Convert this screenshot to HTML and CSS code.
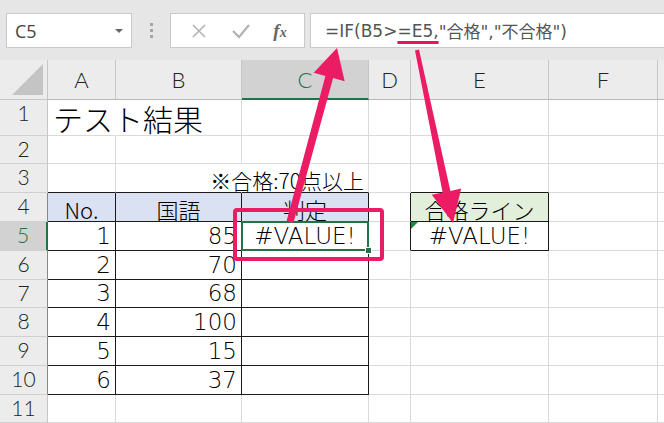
FILE: index.html
```html
<!DOCTYPE html>
<html lang="ja">
<head>
    <meta charset="UTF-8">
    <title>テスト結果</title>
    <link rel="stylesheet" href="styles.css">
</head>
<body>

    <div class="toolbar">
        <div class="namebox">
            <span>C5</span>
            <span class="caret"></span>
        </div>
        <div class="grip"><i></i><i></i><i></i></div>
        <div class="fxbtns">
            <svg class="icon" width="18" height="18" viewBox="0 0 18 18"><path d="M3 3 L15 15 M15 3 L3 15" stroke="#b3b3b3" stroke-width="1.6" fill="none"/></svg>
            <svg class="icon" width="20" height="18" viewBox="0 0 20 18"><path d="M2 9 L8 15 L18 3" stroke="#b3b3b3" stroke-width="2.2" fill="none"/></svg>
            <span class="fx">f<small>x</small></span>
        </div>
        <div class="formula">=IF(B5&gt;<span class="mark">=E5,</span>"合格","不合格")</div>
    </div>

    <div class="sheet">
        <!-- 列見出し -->
        <div class="corner"></div>
        <div class="ch">A</div>
        <div class="ch">B</div>
        <div class="ch sel">C</div>
        <div class="ch">D</div>
        <div class="ch">E</div>
        <div class="ch">F</div>
        <div class="ch"></div>

        <!-- 1 -->
        <div class="rh">1</div>
        <div class="c nr title">テスト結果</div>
        <div class="c"></div>
        <div class="c"></div>
        <div class="c"></div>
        <div class="c"></div>
        <div class="c"></div>
        <div class="c"></div>

        <!-- 2 -->
        <div class="rh">2</div>
        <div class="c"></div>
        <div class="c"></div>
        <div class="c"></div>
        <div class="c"></div>
        <div class="c"></div>
        <div class="c"></div>
        <div class="c"></div>

        <!-- 3 -->
        <div class="rh">3</div>
        <div class="c bb"></div>
        <div class="c bb nr"></div>
        <div class="c bb note"><span>※合格:70点以上</span></div>
        <div class="c"></div>
        <div class="c bb"></div>
        <div class="c"></div>
        <div class="c"></div>

        <!-- 4 -->
        <div class="rh br">4</div>
        <div class="c br bb blue mid">No.</div>
        <div class="c br bb blue mid">国語</div>
        <div class="c br bb blue mid">判定</div>
        <div class="c br"></div>
        <div class="c br bb green mid">合格ライン</div>
        <div class="c"></div>
        <div class="c"></div>

        <!-- 5 -->
        <div class="rh br sel">5</div>
        <div class="c br bb num">1</div>
        <div class="c br bb num">85</div>
        <div class="c br bb mid active">#VALUE!</div>
        <div class="c br"></div>
        <div class="c br bb mid flag">#VALUE!</div>
        <div class="c"></div>
        <div class="c"></div>

        <!-- 6 -->
        <div class="rh br">6</div>
        <div class="c br bb num">2</div>
        <div class="c br bb num">70</div>
        <div class="c br bb"></div>
        <div class="c"></div>
        <div class="c"></div>
        <div class="c"></div>
        <div class="c"></div>

        <!-- 7 -->
        <div class="rh br">7</div>
        <div class="c br bb num">3</div>
        <div class="c br bb num">68</div>
        <div class="c br bb"></div>
        <div class="c"></div>
        <div class="c"></div>
        <div class="c"></div>
        <div class="c"></div>

        <!-- 8 -->
        <div class="rh br">8</div>
        <div class="c br bb num">4</div>
        <div class="c br bb num">100</div>
        <div class="c br bb"></div>
        <div class="c"></div>
        <div class="c"></div>
        <div class="c"></div>
        <div class="c"></div>

        <!-- 9 -->
        <div class="rh br">9</div>
        <div class="c br bb num">5</div>
        <div class="c br bb num">15</div>
        <div class="c br bb"></div>
        <div class="c"></div>
        <div class="c"></div>
        <div class="c"></div>
        <div class="c"></div>

        <!-- 10 -->
        <div class="rh br">10</div>
        <div class="c br bb num">6</div>
        <div class="c br bb num">37</div>
        <div class="c br bb"></div>
        <div class="c"></div>
        <div class="c"></div>
        <div class="c"></div>
        <div class="c"></div>

        <!-- 11 -->
        <div class="rh">11</div>
        <div class="c"></div>
        <div class="c"></div>
        <div class="c"></div>
        <div class="c"></div>
        <div class="c"></div>
        <div class="c"></div>
        <div class="c"></div>
    </div>

    <!-- 注釈 (矢印と枠) -->
    <svg class="notes" width="664" height="423" viewBox="0 0 664 423">
        <rect x="235" y="210" width="147" height="49" rx="2" fill="none" stroke="#ec1c64" stroke-width="4"/>
        <polygon fill="#ec1c64" points="286.6,221 325.4,76 313.7,72.8 337,48 344.7,81.2 333.1,78.1 293.4,223"/>
        <polygon fill="#ec1c64" points="415,50.4 442.6,192.5 431.8,194.8 453,223 461.2,188.6 450.4,190.9 419,49.6"/>
    </svg>

</body>
</html>
```

FILE: styles.css
```css
body {
    margin: 0;
    width: 664px;
    height: 423px;
    overflow: hidden;
    position: relative;
    background: #fff;
    font-family: "DejaVu Sans", "Noto Sans CJK JP", sans-serif;
    color: #000;
}

/* 上のバー */
.toolbar {
    height: 60px;
    box-sizing: border-box;
    padding: 13px 0 0 6px;
    display: flex;
    align-items: flex-start;
    background: #e6e6e6;
}

.namebox {
    width: 126px;
    height: 35px;
    box-sizing: border-box;
    border: 1px solid #c8c8c8;
    background: #fff;
    display: flex;
    align-items: center;
    justify-content: space-between;
    padding: 0 8px 0 8px;
    font-family: "Open Sans", sans-serif;
    font-size: 18px;
    color: #444;
}

.caret {
    width: 0;
    height: 0;
    border-left: 4px solid transparent;
    border-right: 4px solid transparent;
    border-top: 4px solid #666;
}

.grip {
    width: 38px;
    height: 35px;
    display: flex;
    flex-direction: column;
    align-items: center;
    justify-content: center;
    gap: 3px;
}

.grip i {
    width: 3px;
    height: 3px;
    background: #a6a6a6;
}

.fxbtns {
    width: 135px;
    height: 35px;
    box-sizing: border-box;
    border: 1px solid #c8c8c8;
    background: #fff;
    display: flex;
    align-items: center;
    justify-content: space-around;
    padding: 0 6px 0 8px;
}

.fx {
    font-family: "Liberation Serif", serif;
    font-style: italic;
    font-weight: bold;
    font-size: 19px;
    color: #666;
}

.fx small {
    font-size: 14px;
}

.formula {
    flex: 1;
    height: 35px;
    margin-left: 5px;
    box-sizing: border-box;
    border: 1px solid #c8c8c8;
    border-right: none;
    background: #fff;
    padding-left: 14px;
    display: flex;
    align-items: center;
    font-family: "DejaVu Sans", "Noto Sans CJK JP", sans-serif;
    font-size: 17px;
    color: #555;
    white-space: nowrap;
}

.mark {
    text-decoration: underline 3px #e8175d;
    text-underline-offset: 4px;
}

/* シート */
.sheet {
    display: grid;
    grid-template-columns: 48px 68px 126px 127px 42px 138px 109px 1fr;
    grid-template-rows: 40px 36px 28px 29px 29px 29px 29px 28px 29px 29px 29px 28px;
}

.corner {
    background: #ececec;
    border-right: 1px solid #c6c6c6;
    border-bottom: 1px solid #c6c6c6;
    position: relative;
}

.corner::after {
    content: "";
    position: absolute;
    right: 4px;
    bottom: 4px;
    width: 31px;
    height: 31px;
    background: #c4c4c4;
    clip-path: polygon(100% 0, 100% 100%, 0 100%);
}

.ch {
    background: #ececec;
    border-right: 1px solid #c6c6c6;
    border-bottom: 1px solid #b8b8b8;
    display: flex;
    align-items: center;
    justify-content: center;
    font-family: "Lato", sans-serif;
    font-weight: 300;
    font-size: 22px;
    color: #222;
}

.ch.sel {
    background: #d2d2d2;
    color: #217346;
    border-bottom: 2px solid #217346;
}

.rh {
    background: #ececec;
    border-right: 1px solid #c6c6c6;
    border-bottom: 1px solid #d0d0d0;
    display: flex;
    align-items: flex-start;
    justify-content: center;
    padding-top: 2px;
    box-sizing: border-box;
    font-family: "Lato", sans-serif;
    font-weight: 300;
    font-size: 21px;
    line-height: 1;
    color: #222;
}

.rh.br {
    border-right-color: #888;
}

.rh.sel {
    background: #d2d2d2;
    color: #217346;
    border-right: 2px solid #217346;
}

.c {
    border-right: 1px solid #dadada;
    border-bottom: 1px solid #dadada;
    display: flex;
    align-items: flex-end;
    padding: 0 4px 1px;
    font-size: 23px;
    font-weight: 200;
    line-height: 1.1;
    white-space: nowrap;
    min-width: 0;
}

.c.br { border-right-color: #1a1a1a; }
.c.bb { border-bottom-color: #1a1a1a; }
.c.nr { border-right-color: transparent; }

.title {
    font-family: "Noto Sans CJK JP", sans-serif;
    font-size: 30px;
    font-weight: 300;
    padding-left: 5px;
    padding-bottom: 0;
}

.note {
    justify-content: flex-end;
    font-family: "Noto Sans CJK JP", sans-serif;
    font-weight: 300;
    font-size: 21px;
    padding-bottom: 0;
}

.note span {
    flex: none;
}

.num {
    justify-content: flex-end;
    padding-right: 4px;
}

.mid {
    justify-content: center;
}

.blue, .green {
    font-family: "Noto Sans CJK JP", sans-serif;
    font-weight: 300;
    font-size: 22px;
    padding-bottom: 0;
}

.blue { background: #d9e1f2; }
.green { background: #e2efda; }

.active {
    position: relative;
}

.active::before {
    content: "";
    position: absolute;
    left: -1px;
    top: -1px;
    right: -1px;
    bottom: -1px;
    border: 2px solid #217346;
}

.active::after {
    content: "";
    position: absolute;
    right: -4px;
    bottom: -4px;
    width: 5px;
    height: 5px;
    background: #217346;
    border: 1px solid #fff;
}

.flag {
    position: relative;
}

.flag::before {
    content: "";
    position: absolute;
    left: 0;
    top: 0;
    width: 7px;
    height: 7px;
    background: #1f8a3a;
    clip-path: polygon(0 0, 100% 0, 0 100%);
}

.notes {
    position: absolute;
    top: 0;
    left: 0;
    pointer-events: none;
}
```
